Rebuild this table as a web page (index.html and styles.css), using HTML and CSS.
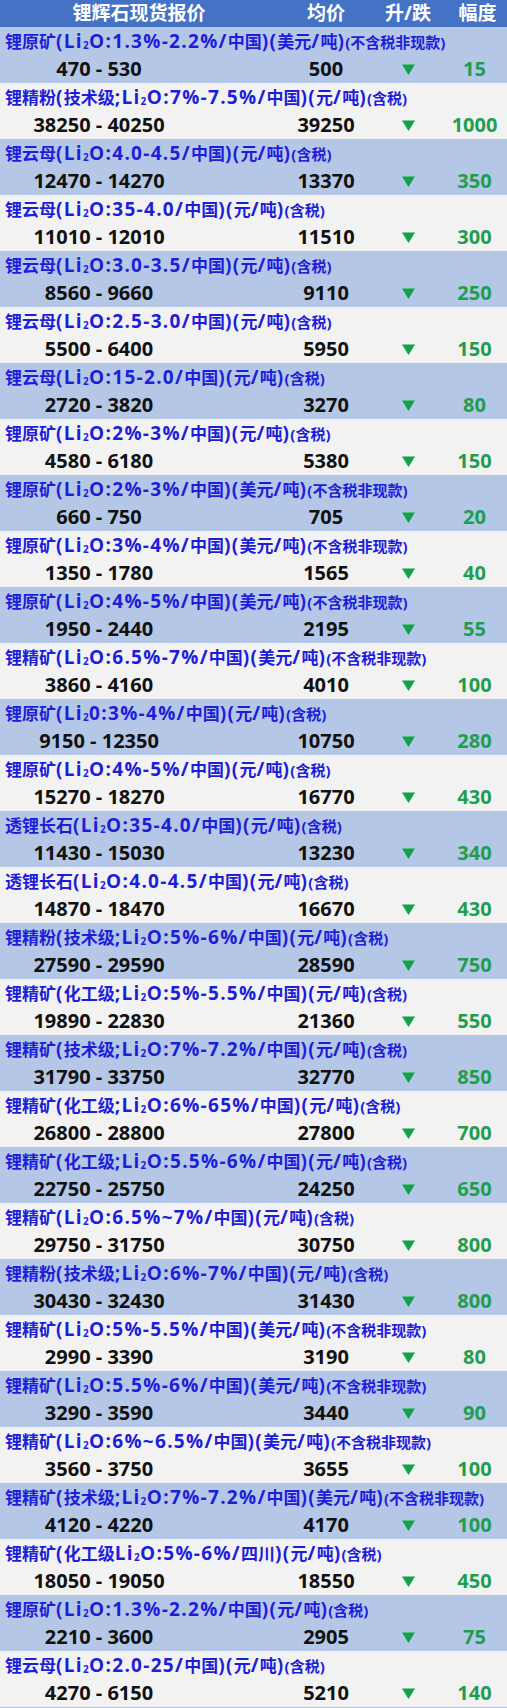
FILE: index.html
```html
<!DOCTYPE html>
<html lang="zh-CN">
<head>
<meta charset="utf-8">
<title>锂辉石现货报价</title>
<link rel="stylesheet" href="styles.css">
</head>
<body>
<div class="table">
  <div class="head">
    <div class="h-name">锂辉石现货报价</div>
    <div class="h-avg">均价</div>
    <div class="h-dir">升/跌</div>
    <div class="h-chg">幅度</div>
  </div>
  <div id="rows"></div>
</div>
<script src="app.js"></script>
</body>
</html>
```
FILE: app.js
```js
var data = [
  ["锂原矿(Li|O:1.3%-2.2%/中国)(美元/吨)", "(不含税非现款)", "470 - 530", "500", "15"],
  ["锂精粉(技术级;Li|O:7%-7.5%/中国)(元/吨)", "(含税)", "38250 - 40250", "39250", "1000"],
  ["锂云母(Li|O:4.0-4.5/中国)(元/吨)", "(含税)", "12470 - 14270", "13370", "350"],
  ["锂云母(Li|O:35-4.0/中国)(元/吨)", "(含税)", "11010 - 12010", "11510", "300"],
  ["锂云母(Li|O:3.0-3.5/中国)(元/吨)", "(含税)", "8560 - 9660", "9110", "250"],
  ["锂云母(Li|O:2.5-3.0/中国)(元/吨)", "(含税)", "5500 - 6400", "5950", "150"],
  ["锂云母(Li|O:15-2.0/中国)(元/吨)", "(含税)", "2720 - 3820", "3270", "80"],
  ["锂原矿(Li|O:2%-3%/中国)(元/吨)", "(含税)", "4580 - 6180", "5380", "150"],
  ["锂原矿(Li|O:2%-3%/中国)(美元/吨)", "(不含税非现款)", "660 - 750", "705", "20"],
  ["锂原矿(Li|O:3%-4%/中国)(美元/吨)", "(不含税非现款)", "1350 - 1780", "1565", "40"],
  ["锂原矿(Li|O:4%-5%/中国)(美元/吨)", "(不含税非现款)", "1950 - 2440", "2195", "55"],
  ["锂精矿(Li|O:6.5%-7%/中国)(美元/吨)", "(不含税非现款)", "3860 - 4160", "4010", "100"],
  ["锂原矿(Li|0:3%-4%/中国)(元/吨)", "(含税)", "9150 - 12350", "10750", "280"],
  ["锂原矿(Li|O:4%-5%/中国)(元/吨)", "(含税)", "15270 - 18270", "16770", "430"],
  ["透锂长石(Li|O:35-4.0/中国)(元/吨)", "(含税)", "11430 - 15030", "13230", "340"],
  ["透锂长石(Li|O:4.0-4.5/中国)(元/吨)", "(含税)", "14870 - 18470", "16670", "430"],
  ["锂精粉(技术级;Li|O:5%-6%/中国)(元/吨)", "(含税)", "27590 - 29590", "28590", "750"],
  ["锂精矿(化工级;Li|O:5%-5.5%/中国)(元/吨)", "(含税)", "19890 - 22830", "21360", "550"],
  ["锂精矿(技术级;Li|O:7%-7.2%/中国)(元/吨)", "(含税)", "31790 - 33750", "32770", "850"],
  ["锂精矿(化工级;Li|O:6%-65%/中国)(元/吨)", "(含税)", "26800 - 28800", "27800", "700"],
  ["锂精矿(化工级;Li|O:5.5%-6%/中国)(元/吨)", "(含税)", "22750 - 25750", "24250", "650"],
  ["锂精矿(Li|O:6.5%~7%/中国)(元/吨)", "(含税)", "29750 - 31750", "30750", "800"],
  ["锂精粉(技术级;Li|O:6%-7%/中国)(元/吨)", "(含税)", "30430 - 32430", "31430", "800"],
  ["锂精矿(Li|O:5%-5.5%/中国)(美元/吨)", "(不含税非现款)", "2990 - 3390", "3190", "80"],
  ["锂精矿(Li|O:5.5%-6%/中国)(美元/吨)", "(不含税非现款)", "3290 - 3590", "3440", "90"],
  ["锂精矿(Li|O:6%~6.5%/中国)(美元/吨)", "(不含税非现款)", "3560 - 3750", "3655", "100"],
  ["锂精矿(技术级;Li|O:7%-7.2%/中国)(美元/吨)", "(不含税非现款)", "4120 - 4220", "4170", "100"],
  ["锂精矿(化工级Li|O:5%-6%/四川)(元/吨)", "(含税)", "18050 - 19050", "18550", "450"],
  ["锂原矿(Li|O:1.3%-2.2%/中国)(元/吨)", "(含税)", "2210 - 3600", "2905", "75"],
  ["锂云母(Li|O:2.0-25/中国)(元/吨)", "(含税)", "4270 - 6150", "5210", "140"]
];

function cjk(s) {
  return s.replace(/([\u4e00-\u9fff]+)/g, '<span class="cj">$1</span>');
}

var rows = document.getElementById("rows");
data.forEach(function (d, i) {
  var item = document.createElement("div");
  item.className = "item " + (i % 2 === 0 ? "odd" : "even");
  var parts = d[0].split("|");
  item.innerHTML =
    '<div class="name">' + cjk(parts[0]) + '<span class="sub">2</span>' + cjk(parts[1]) +
    '<span class="note">' + cjk(d[1]) + '</span></div>' +
    '<div class="vals">' +
      '<div class="range">' + d[2] + '</div>' +
      '<div class="avg">' + d[3] + '</div>' +
      '<div class="dir"><svg width="13" height="11" viewBox="0 0 13 11"><polygon points="0,0.5 13,0.5 6.5,11" fill="#13a245"/></svg></div>' +
      '<div class="chg">' + d[4] + '</div>' +
    '</div>';
  rows.appendChild(item);
});
```
FILE: styles.css
```css
html, body {
  margin: 0;
  padding: 0;
}
body {
  width: 507px;
  background: #b4c7e7;
  font-family: "Open Sans", "Noto Sans CJK SC", sans-serif;
  font-weight: 700;
}
.table {
  width: 507px;
}
.head {
  height: 27px;
  background: #4472c4;
  color: #ffffff;
  display: grid;
  grid-template-columns: 278px 96px 68px 65px;
  align-items: center;
  font-size: 19px;
  line-height: 27px;
}
.head > div {
  text-align: center;
}
.h-chg {
  padding-left: 6px;
}
.item {
  height: 56px;
  display: flex;
  flex-direction: column;
}
.odd {
  background: #b4c7e7;
}
.even {
  background: #f2f2f2;
}
.name {
  height: 28px;
  line-height: 28px;
  padding-left: 5px;
  color: #1e1ed9;
  font-size: 19px;
  letter-spacing: 1.3px;
  white-space: nowrap;
}
.cj {
  font-size: 17px;
  letter-spacing: 0;
}
.sub {
  font-size: 10px;
  letter-spacing: 0.5px;
  vertical-align: -1px;
  line-height: 0;
}
.note {
  font-size: 15px;
  letter-spacing: 0;
}
.note .cj {
  font-size: 15px;
}
.vals {
  height: 28px;
  display: grid;
  grid-template-columns: 198px 80px 96px 68px 65px;
  align-items: center;
  font-size: 20px;
  line-height: 28px;
  color: #111111;
}
.range {
  grid-column: 1;
  text-align: center;
}
.avg {
  grid-column: 3;
  text-align: center;
}
.dir {
  grid-column: 4;
  display: flex;
  justify-content: center;
  align-items: center;
}
.dir svg {
  display: block;
}
.chg {
  grid-column: 5;
  text-align: center;
  color: #1f9e4e;
}
```
